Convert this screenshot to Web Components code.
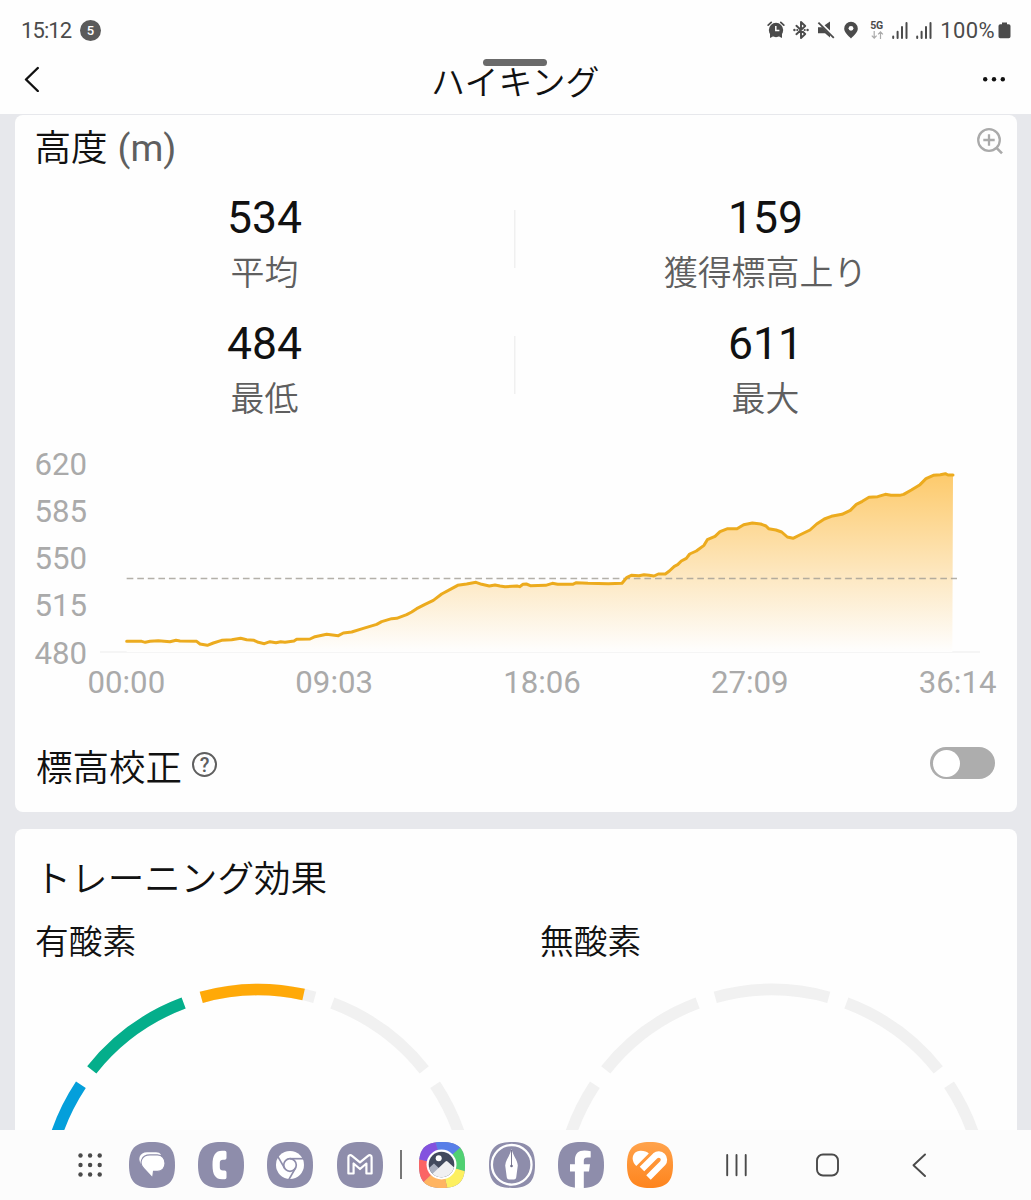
<!DOCTYPE html>
<html lang="ja">
<head>
<meta charset="utf-8">
<title>ハイキング</title>
<style>
body {
    margin: 0;
    background: #fefefe;
    color: #111;
    font-family: Roboto, 'Noto Sans CJK JP', sans-serif;
}
</style>
</head>
<body>

<hike-screen>
    <status-bar slot="top" time="15:12" count="5" battery="100%"></status-bar>
    <title-bar slot="top">ハイキング</title-bar>

    <info-card class="first">
        <card-title unit="(m)" zoom>高度</card-title>
        <stat-grid>
            <stat-item value="534">平均</stat-item>
            <stat-item value="159">獲得標高上り</stat-item>
            <stat-item value="484">最低</stat-item>
            <stat-item value="611">最大</stat-item>
        </stat-grid>
        <altitude-chart levels="620,585,550,515,480" times="00:00,09:03,18:06,27:09,36:14"></altitude-chart>
        <toggle-row>標高校正</toggle-row>
    </info-card>

    <info-card>
        <card-title class="effect">トレーニング効果</card-title>
        <effect-pair>
            <effect-gauge score="2.9">有酸素</effect-gauge>
            <effect-gauge score="0">無酸素</effect-gauge>
        </effect-pair>
    </info-card>

    <dock-bar slot="bottom"></dock-bar>
</hike-screen>

<script>
function attach(el, html) {
    const template = document.createElement('template');
    template.innerHTML = html;
    el.attachShadow({ mode: 'open' }).appendChild(template.content.cloneNode(true));
}


class HikeScreen extends HTMLElement {
    constructor() {
        super();
        attach(this, `
<style>
:host {
    display: flex;
    flex-direction: column;
    width: 1031px;
    height: 1200px;
    overflow: hidden;
}
main {
    flex: 1;
    min-height: 0;
    overflow: hidden;
    display: flex;
    flex-direction: column;
    gap: 17px;
    padding: 1px 14.5px 0;
    background: #e7e8ec;
}
</style>
<slot name="top"></slot>
<main><slot></slot></main>
<slot name="bottom"></slot>
`);
    }
}


class StatusBar extends HTMLElement {
    constructor() {
        super();
        const bars = `<svg width="16" height="17" viewBox="0 0 16 17"><path d="M1.2 14.4v1.6M5.6 9.7v6.3M10 5v11M14.5 1v15" stroke="#4b4b4b" stroke-width="2" stroke-linecap="round"/></svg>`;
        attach(this, `
<style>
:host {
    display: flex;
    align-items: center;
    height: 60px;
    padding: 0 20px 0 21px;
    box-sizing: border-box;
    color: #4b4b4b;
    font-size: 22px;
    line-height: 61px;
}
svg { display: block; }
.time { letter-spacing: -.9px; width: 59px; }
.count {
    width: 21px;
    height: 21px;
    border-radius: 50%;
    background: #5a5a5a;
    color: #fff;
    font-size: 13px;
    font-weight: 500;
    line-height: 21px;
    text-align: center;
}
.icons { display: flex; align-items: center; gap: 8px; margin-left: auto; }
.net { width: 14px; margin: 0 0 0 3px; font-size: 10.5px; font-weight: 700; line-height: 9px; letter-spacing: -.2px; }
.net svg { margin: 1px 0 0 .5px; }
.batt { display: flex; align-items: center; gap: 3px; letter-spacing: .4px; }
</style>
<span class="time">${this.getAttribute('time')}</span>
<span class="count">${this.getAttribute('count')}</span>
<div class="icons">
    <svg width="18" height="18" viewBox="0 0 18 18">
        <path d="M1.2 4.2 4.2 1.4M16.8 4.2 13.8 1.4" stroke="#4b4b4b" stroke-width="1.7" stroke-linecap="round"/>
        <circle cx="9" cy="9" r="7.2" fill="#4b4b4b"/>
        <path d="M3 12v5l3-1.6M15 12v5l-3-1.6" fill="#4b4b4b"/>
        <path d="M8.8 5v4.6h3.6" fill="none" stroke="#fff" stroke-width="1.5"/>
    </svg>
    <svg width="16" height="18" viewBox="0 0 16 18">
        <path d="M3.4 4.8 12.2 13 8 17V1l4.2 4-8.8 8.2" fill="none" stroke="#4b4b4b" stroke-width="1.9" stroke-linejoin="round" stroke-linecap="round"/>
        <circle cx="1.4" cy="9" r="1.2" fill="#4b4b4b"/><circle cx="4.3" cy="9" r="1.1" fill="#4b4b4b"/>
        <circle cx="11.7" cy="9" r="1.1" fill="#4b4b4b"/><circle cx="14.6" cy="9" r="1.2" fill="#4b4b4b"/>
    </svg>
    <svg width="18" height="18" viewBox="0 0 18 18">
        <path d="M1 6.2h4.2l7.8 7.6V16.4L8 12.3H1zM7.6 4.2 13 .6v9z" fill="#4b4b4b"/>
        <path d="M1.4 1.6 16.8 16.8" stroke="#4b4b4b" stroke-width="1.8"/>
    </svg>
    <svg width="16" height="18" viewBox="0 0 16 18">
        <path d="M8 .8a6.8 6.8 0 0 1 6.8 6.8C14.8 11.5 11 14.6 8 17.6 5 14.6 1.2 11.5 1.2 7.6A6.8 6.8 0 0 1 8 .8z" fill="#4b4b4b"/>
        <circle cx="8" cy="7.3" r="2.4" fill="#fff"/>
    </svg>
    <div class="net">5G<svg width="13" height="8" viewBox="0 0 13 8"><path d="M3.2 0v7M.8 4.7l2.4 2.4 2.4-2.4M9.5 8V1M7.1 3.3 9.5.9l2.4 2.4" fill="none" stroke="#aaa" stroke-width="1.2"/></svg></div>
    ${bars}${bars}
    <span class="batt">${this.getAttribute('battery')}<svg width="13" height="17" viewBox="0 0 13 17"><path d="M4 .5h5v1.7h1.7q1.8 0 1.8 1.8v10.5q0 1.8-1.8 1.8H2.3Q.5 16.3.5 14.5V4q0-1.8 1.8-1.8H4z" fill="#4b4b4b"/></svg></span>
</div>
`);
    }
}


class TitleBar extends HTMLElement {
    constructor() {
        super();
        attach(this, `
<style>
:host {
    position: relative;
    display: flex;
    align-items: center;
    justify-content: space-between;
    height: 54px;
    padding: 0 24px 0 23.5px;
    box-sizing: border-box;
}
h1 {
    margin: -8px 0 0;
    font-size: 34px;
    font-weight: 350;
    line-height: 40px;
}
svg { display: block; margin-top: -16px; }
/* window handle hangs over the title */
.handle {
    position: absolute;
    left: 483px;
    top: -1px;
    width: 64px;
    height: 6.5px;
    border-radius: 4px;
    background: #6a6a6a;
}
</style>
<svg width="24" height="26" viewBox="0 0 24 26"><path d="M13.8 2 2 13.5 13.8 25" fill="none" stroke="#111" stroke-width="2.4" stroke-linecap="round" stroke-linejoin="round"/></svg>
<h1><slot></slot></h1>
<svg width="24" height="26" viewBox="0 0 24 26"><g fill="#111"><circle cx="2.2" cy="13.2" r="2.2"/><circle cx="11" cy="13.2" r="2.2"/><circle cx="19.8" cy="13.2" r="2.2"/></g></svg>
<div class="handle"></div>
`);
    }
}


class InfoCard extends HTMLElement {
    constructor() {
        super();
        attach(this, `
<style>
:host {
    display: block;
    flex: none;
    box-sizing: border-box;
    height: 400px;
    border-radius: 8px;
    background: #fefefe;
    overflow: hidden;
}
:host(.first) { height: 697px; }
</style>
<slot></slot>
`);
    }
}


class CardTitle extends HTMLElement {
    constructor() {
        super();
        const zoom = this.hasAttribute('zoom') ? `
<svg width="27" height="27" viewBox="0 0 27 27" fill="none" stroke="#aaa">
    <circle cx="12" cy="12" r="10.8" stroke-width="2.3"/>
    <path d="M12 6.3v11.4M6.3 12h11.4" stroke-width="2.3"/>
    <path d="M19.5 19.8 25 25.3" stroke-width="2.6"/>
</svg>` : '';
        attach(this, `
<style>
:host {
    display: flex;
    justify-content: space-between;
    padding: 7.5px 13px 0 20px;
    height: 78px;
    box-sizing: border-box;
}
:host(.effect) { padding-top: 25px; height: 93px; }
h2 {
    margin: 0;
    font-size: 36.6px;
    font-weight: 350;
    line-height: 50px;
    white-space: nowrap;
}
span { margin-left: 1px; color: #5f5f5f; font-size: 37.5px; font-weight: 400; }
svg { display: block; margin-top: 5px; }
</style>
<h2><slot></slot> <span>${this.getAttribute('unit') || ''}</span></h2>
${zoom}
`);
    }
}


class StatGrid extends HTMLElement {
    constructor() {
        super();
        attach(this, `
<style>
:host {
    display: grid;
    grid-template-columns: 1fr 1fr;
    row-gap: 28px;
}
::slotted(:nth-child(odd)) { --divider: #f0f0f0; }
</style>
<slot></slot>
`);
    }
}


class StatItem extends HTMLElement {
    constructor() {
        super();
        attach(this, `
<style>
:host {
    display: block;
    height: 98px;
    text-align: center;
    background: linear-gradient(var(--divider, transparent), var(--divider, transparent)) right 17px / 1.5px 58px no-repeat;
}
.value { margin-left: -1px; font-size: 44.5px; line-height: 51px; }
.label { margin: 12px 0 0 -1px; font-size: 33.9px; font-weight: 350; line-height: 36px; color: #5f5f5f; }
</style>
<div class="value">${this.getAttribute('value')}</div>
<div class="label"><slot></slot></div>
`);
    }
}


// recorded track, three units per pixel
const TRACK = [
    320,604, 365,604, 376,607, 390,604, 415,602, 450,605, 468,601, 480,603, 530,604, 540,612, 562,616, 580,609,
    605,601, 635,599, 662,595, 680,599, 702,601, 715,607, 733,611, 750,605, 768,608, 782,605, 795,607, 822,603,
    830,598, 870,597, 885,590, 920,583, 955,587, 970,579, 995,576, 1030,565, 1070,553, 1085,545, 1115,536,
    1130,535, 1160,524, 1175,516, 1190,506, 1215,493, 1240,481, 1265,462, 1295,446, 1313,436, 1340,432,
    1368,427, 1385,433, 1408,438, 1425,435, 1440,438, 1455,440, 1491,438, 1499,440, 1509,433, 1519,432,
    1531,437, 1577,436, 1597,430, 1613,433, 1658,433, 1669,428, 1704,430, 1765,431, 1806,430, 1821,412,
    1834,406, 1857,407, 1872,404, 1887,406, 1902,408, 1915,402, 1936,402, 1948,393, 1963,379, 1973,374,
    1984,363, 1999,355, 2009,342, 2029,333, 2052,316, 2062,299, 2085,289, 2100,275, 2123,266, 2151,266,
    2171,254, 2197,249, 2222,252, 2238,258, 2246,266, 2268,270, 2285,276, 2302,291, 2319,295, 2339,285,
    2370,270, 2390,252, 2413,237, 2434,229, 2466,223, 2491,211, 2509,193, 2527,184, 2547,172, 2573,170,
    2596,163, 2613,166, 2639,166, 2651,163, 2674,150, 2700,134, 2718,116, 2740,106, 2761,104, 2776,101,
    2784,105, 2799,105
];

class AltitudeChart extends HTMLElement {
    constructor() {
        super();
        const levels = this.getAttribute('levels').split(',').map(t => `<span>${t}</span>`).join('');
        const times = this.getAttribute('times').split(',').map(t => `<span>${t}</span>`).join('');
        const line = TRACK.join(' ');
        attach(this, `
<style>
:host {
    display: block;
    margin-top: 23px;
    color: #aaa;
    font-size: 31.2px;
}
.plot { display: flex; padding-left: 20px; }
.levels { width: 65.5px; padding-top: .6px; display: flex; flex-direction: column; line-height: 47.3px; }
svg { display: block; }
.times {
    display: flex;
    justify-content: space-between;
    margin: -12.6px 20px 0 73px;
    line-height: 37px;
}
</style>
<div class="plot">
    <div class="levels">${levels}</div>
    <svg width="881" height="220" viewBox="240 0 2643 660">
        <defs>
            <linearGradient id="fill" gradientUnits="userSpaceOnUse" x1="0" y1="100" x2="0" y2="636">
                <stop offset="0" stop-color="#fdca6b"/>
                <stop offset=".58" stop-color="#fde8c2"/>
                <stop offset="1" stop-color="#fefefe"/>
            </linearGradient>
        </defs>
        <path d="M240 636H2880" stroke="#f2f2f2" stroke-width="4"/>
        <polygon points="320 636 ${line} 2797 636" fill="url(#fill)"/>
        <path d="M320 415.5H2811" stroke="#a09c94" stroke-opacity=".8" stroke-width="4.5" stroke-dasharray="20 11.7"/>
        <polyline points="${line}" fill="none" stroke="#ecab1e" stroke-width="9" stroke-linejoin="round" stroke-linecap="round"/>
    </svg>
</div>
<div class="times">${times}</div>
`);
    }
}


class ToggleRow extends HTMLElement {
    constructor() {
        super();
        attach(this, `
<style>
:host {
    display: flex;
    align-items: center;
    height: 50px;
    margin-top: 41px;
    padding: 0 21.5px 0 21.5px;
}
.label { margin-top: 4px; font-size: 36.5px; font-weight: 350; line-height: 50px; }
.help {
    width: 21px;
    height: 21px;
    margin: -5px 0 0 10px;
    border: 2px solid #5f5f5f;
    border-radius: 50%;
    color: #5f5f5f;
    font-size: 20px;
    font-weight: 500;
    line-height: 22px;
    text-align: center;
}
.switch {
    width: 65px;
    height: 32px;
    box-sizing: border-box;
    margin: -8px 0 0 auto;
    padding: 2.5px;
    border-radius: 16px;
    background: #adadad;
}
.knob { width: 27px; height: 27px; border-radius: 50%; background: #fff; }
</style>
<span class="label"><slot></slot></span>
<span class="help">?</span>
<div class="switch"><div class="knob"></div></div>
`);
    }
}


class EffectPair extends HTMLElement {
    constructor() {
        super();
        attach(this, `
<style>
:host {
    display: grid;
    grid-template-columns: 446px 463.5px;
    column-gap: 59px;
    padding-left: 20.5px;
}
</style>
<slot></slot>
`);
    }
}


class EffectGauge extends HTMLElement {
    // arc on a circle of radius 212.4, angles in degrees from the top
    arc(from, to, color) {
        const point = a => {
            const rad = a * Math.PI / 180;
            return `${(220 + 212.4 * Math.sin(rad)).toFixed(2)} ${(220 - 212.4 * Math.cos(rad)).toFixed(2)}`;
        };
        return `<path d="M${point(from)}A212.4 212.4 0 0 1 ${point(to)}" stroke="${color}"/>`;
    }

    constructor() {
        super();
        const score = Number(this.getAttribute('score'));
        const colors = ['#049fdb', '#04ae8b', '#ffa908', '#ff7a30', '#f04848'];
        let arcs = '';
        for (let i = 0; i < 5; i++) {
            const start = -87.5 + i * 36;
            const part = Math.max(0, Math.min(1, score - i));
            arcs += this.arc(start, start + 31, '#f1f1f1');
            if (part > 0) arcs += this.arc(start, start + 31 * part, colors[i]);
        }
        attach(this, `
<style>
:host { display: block; }
h3 { margin: 0; font-size: 33.7px; font-weight: 350; line-height: 42px; }
svg { display: block; margin: 17.5px auto 0; }
</style>
<h3><slot></slot></h3>
<svg width="440" height="230" viewBox="0 0 440 230" fill="none" stroke-width="11.7">${arcs}</svg>
`);
    }
}


const SQUIRCLE = 'M23 0C39.5 0 46 6.5 46 23S39.5 46 23 46 0 39.5 0 23 6.5 0 23 0Z';

// colour wheel wedges around the gallery icon
const wheel = [[-15, 48, '#587ee8'], [48, 106, '#50d172'], [106, 166, '#fdf060'], [166, 226, '#ffb461'], [226, 283, '#fb6464'], [283, 345, '#8352df']]
    .map(([a, b, c]) => {
        const p = d => `${(22.5 + 50 * Math.sin(d * Math.PI / 180)).toFixed(1)} ${(22.5 - 50 * Math.cos(d * Math.PI / 180)).toFixed(1)}`;
        return `<path d="M22.5 22.5L${p(a)}L${p(b)}Z" fill="${c}"/>`;
    }).join('');

const GLYPHS = {
    messages: `
        <path d="M12 22C8.5 17 10.5 10.5 18 10.3H27Q30.5 10.3 32 12.5L20 20Z" fill="#fff"/>
        <path d="M21 12.9H28.5C33 12.9 36 16.6 36 21.3S33 29.4 28.5 29.4H24.5L23.6 35.8 14.8 26.5C9.5 21 12.5 12.9 21 12.9Z" fill="#fff" stroke="#8e8dab" stroke-width="1.1"/>`,
    phone: `<path d="M24 8.7H26.8Q28.5 8.7 28.5 10.4V16Q28.5 17.8 26.7 17.8H25Q21.8 17.8 21.8 20.8V25.6Q21.8 28.6 25 28.6H26.7Q28.5 28.6 28.5 30.4V35.5Q28.5 37.2 26.8 37.2H24C17.5 37.2 14.5 33 14.5 23S17.5 8.7 24 8.7Z" fill="#fff"/>`,
    browser: `
        <circle cx="23" cy="23" r="14" fill="#fff"/>
        <g fill="none" stroke="#8e8dab" stroke-width="1.7">
            <circle cx="23" cy="23" r="6.3"/>
            <path d="M23 16.7H38"/>
            <path d="M23 16.7H38" transform="rotate(120 23 23)"/>
            <path d="M23 16.7H38" transform="rotate(240 23 23)"/>
        </g>`,
    mail: `<path d="M11.4 31.5V15.2C11.4 13 13.5 12.6 15 13.8L23 20.3 31 13.8C32.5 12.6 34.6 13 34.6 15.2V31.5H29.4V21.5L23 27 16.6 21.5V31.5Z" fill="none" stroke="#fff" stroke-width="2.2" stroke-linejoin="round"/>`,
    gallery: `
        <clipPath id="sq"><path d="${SQUIRCLE}"/></clipPath><clipPath id="disc"><circle cx="22.5" cy="22.5" r="12.8"/></clipPath>
        <g clip-path="url(#sq)">${wheel}</g>
        <circle cx="22.5" cy="22.5" r="15" fill="#fff"/>
        <g clip-path="url(#disc)">
            <path d="M8 8H38V38H8Z" fill="#424a5d"/>
            <circle cx="19.7" cy="16.3" r="3" fill="#fff"/>
            <path d="M8 28 15 21.5 24 30V38H8Z" fill="#aab0bf"/>
            <path d="M8 37 26.5 19.5Q27.5 18.6 28.5 19.5L38 28V38H8Z" fill="#f0f0f2"/>
        </g>`,
    pen: `
        <circle cx="22.7" cy="22.8" r="19.8" fill="none" stroke="#fff" stroke-width="2.3"/>
        <path d="M22.5 7C21 13.5 16.5 18 16.2 23.5L17.8 35.5Q18.1 37.6 20 37.6H25Q26.9 37.6 27.2 35.5L28.8 23.5C28.5 18 24 13.5 22.5 7Z" fill="#fff"/>
        <path d="M22.5 8V24" stroke="#6d6c88" stroke-width=".9"/><circle cx="22.5" cy="24" r="1.3" fill="#6d6c88"/>`,
    social: `<path d="M16.9 46V29.4H12V22.2H16.9V18.5C16.9 11.5 20.5 8.6 26.5 8.6Q30 8.6 32.7 9.2V15.6H29.5C26.5 15.6 25.8 17 25.8 19V22.2H32L31 29.4H25.8V46Z" fill="#fff"/>`,
    health: `
        <path d="M9.3 24C2.5 17.5 6 9 13.3 8.8 17 8.7 20 9.6 21.8 11.5Z" fill="#fff"/>
        <path d="M15 27.1 28.3 13.8A5.25 5.25 0 0 1 35.7 21.2L21.5 35.4" fill="none" stroke="#fff" stroke-width="6.4"/>`
};

class DockIcon extends HTMLElement {
    constructor() {
        super();
        const name = this.getAttribute('name');
        const back = name === 'health' ? 'url(#orange)' : '#8e8dab';
        attach(this, `
<style>
:host { display: block; width: 46px; height: 46px; }
svg { display: block; }
</style>
<svg width="46" height="46" viewBox="0 0 46 46">
    <linearGradient id="orange" x1="0" y1="0" x2="0" y2="1"><stop stop-color="#ffa34c"/><stop offset="1" stop-color="#fe841d"/></linearGradient>
    <path d="${SQUIRCLE}" fill="${back}"/>
    ${GLYPHS[name]}
</svg>
`);
    }
}


class DockBar extends HTMLElement {
    constructor() {
        super();
        let dots = '';
        for (let i = 0; i < 9; i++) {
            dots += `<circle cx="${2.5 + (i % 3) * 9.6}" cy="${2.5 + Math.floor(i / 3) * 9.5}" r="2.2"/>`;
        }
        attach(this, `
<style>
:host {
    display: flex;
    align-items: center;
    height: 70px;
    box-sizing: border-box;
    padding: 0 0 1px 78px;
    background: #fcfcfc;
}
svg { display: block; }
.group { display: flex; gap: 23.4px; margin-left: 26px; }
.line { width: 1.5px; height: 29px; margin-left: 17.5px; background: #777; }
.line + .group { margin-left: 17.5px; }
.keys { margin-left: 52.5px; }
</style>
<svg width="24.5" height="24" viewBox="0 0 24.5 24" fill="#4a4a4a">${dots}</svg>
<div class="group">
    <dock-icon name="messages"></dock-icon>
    <dock-icon name="phone"></dock-icon>
    <dock-icon name="browser"></dock-icon>
    <dock-icon name="mail"></dock-icon>
</div>
<div class="line"></div>
<div class="group">
    <dock-icon name="gallery"></dock-icon>
    <dock-icon name="pen"></dock-icon>
    <dock-icon name="social"></dock-icon>
    <dock-icon name="health"></dock-icon>
</div>
<svg class="keys" width="202" height="24" viewBox="0 0 202 24" fill="none" stroke="#4a4a4a" stroke-width="1.9" stroke-linecap="round" stroke-linejoin="round">
    <path d="M1.2 2V22.2M10.5 2V22.2M19.7 2V22.2"/>
    <rect x="91" y="1.5" width="21" height="21" rx="6"/>
    <path d="M199 1.5 187.5 12.2 199 23"/>
</svg>
`);
    }
}


customElements.define('hike-screen', HikeScreen);
customElements.define('status-bar', StatusBar);
customElements.define('title-bar', TitleBar);
customElements.define('info-card', InfoCard);
customElements.define('card-title', CardTitle);
customElements.define('stat-grid', StatGrid);
customElements.define('stat-item', StatItem);
customElements.define('altitude-chart', AltitudeChart);
customElements.define('toggle-row', ToggleRow);
customElements.define('effect-pair', EffectPair);
customElements.define('effect-gauge', EffectGauge);
customElements.define('dock-icon', DockIcon);
customElements.define('dock-bar', DockBar);
</script>
</body>
</html>
